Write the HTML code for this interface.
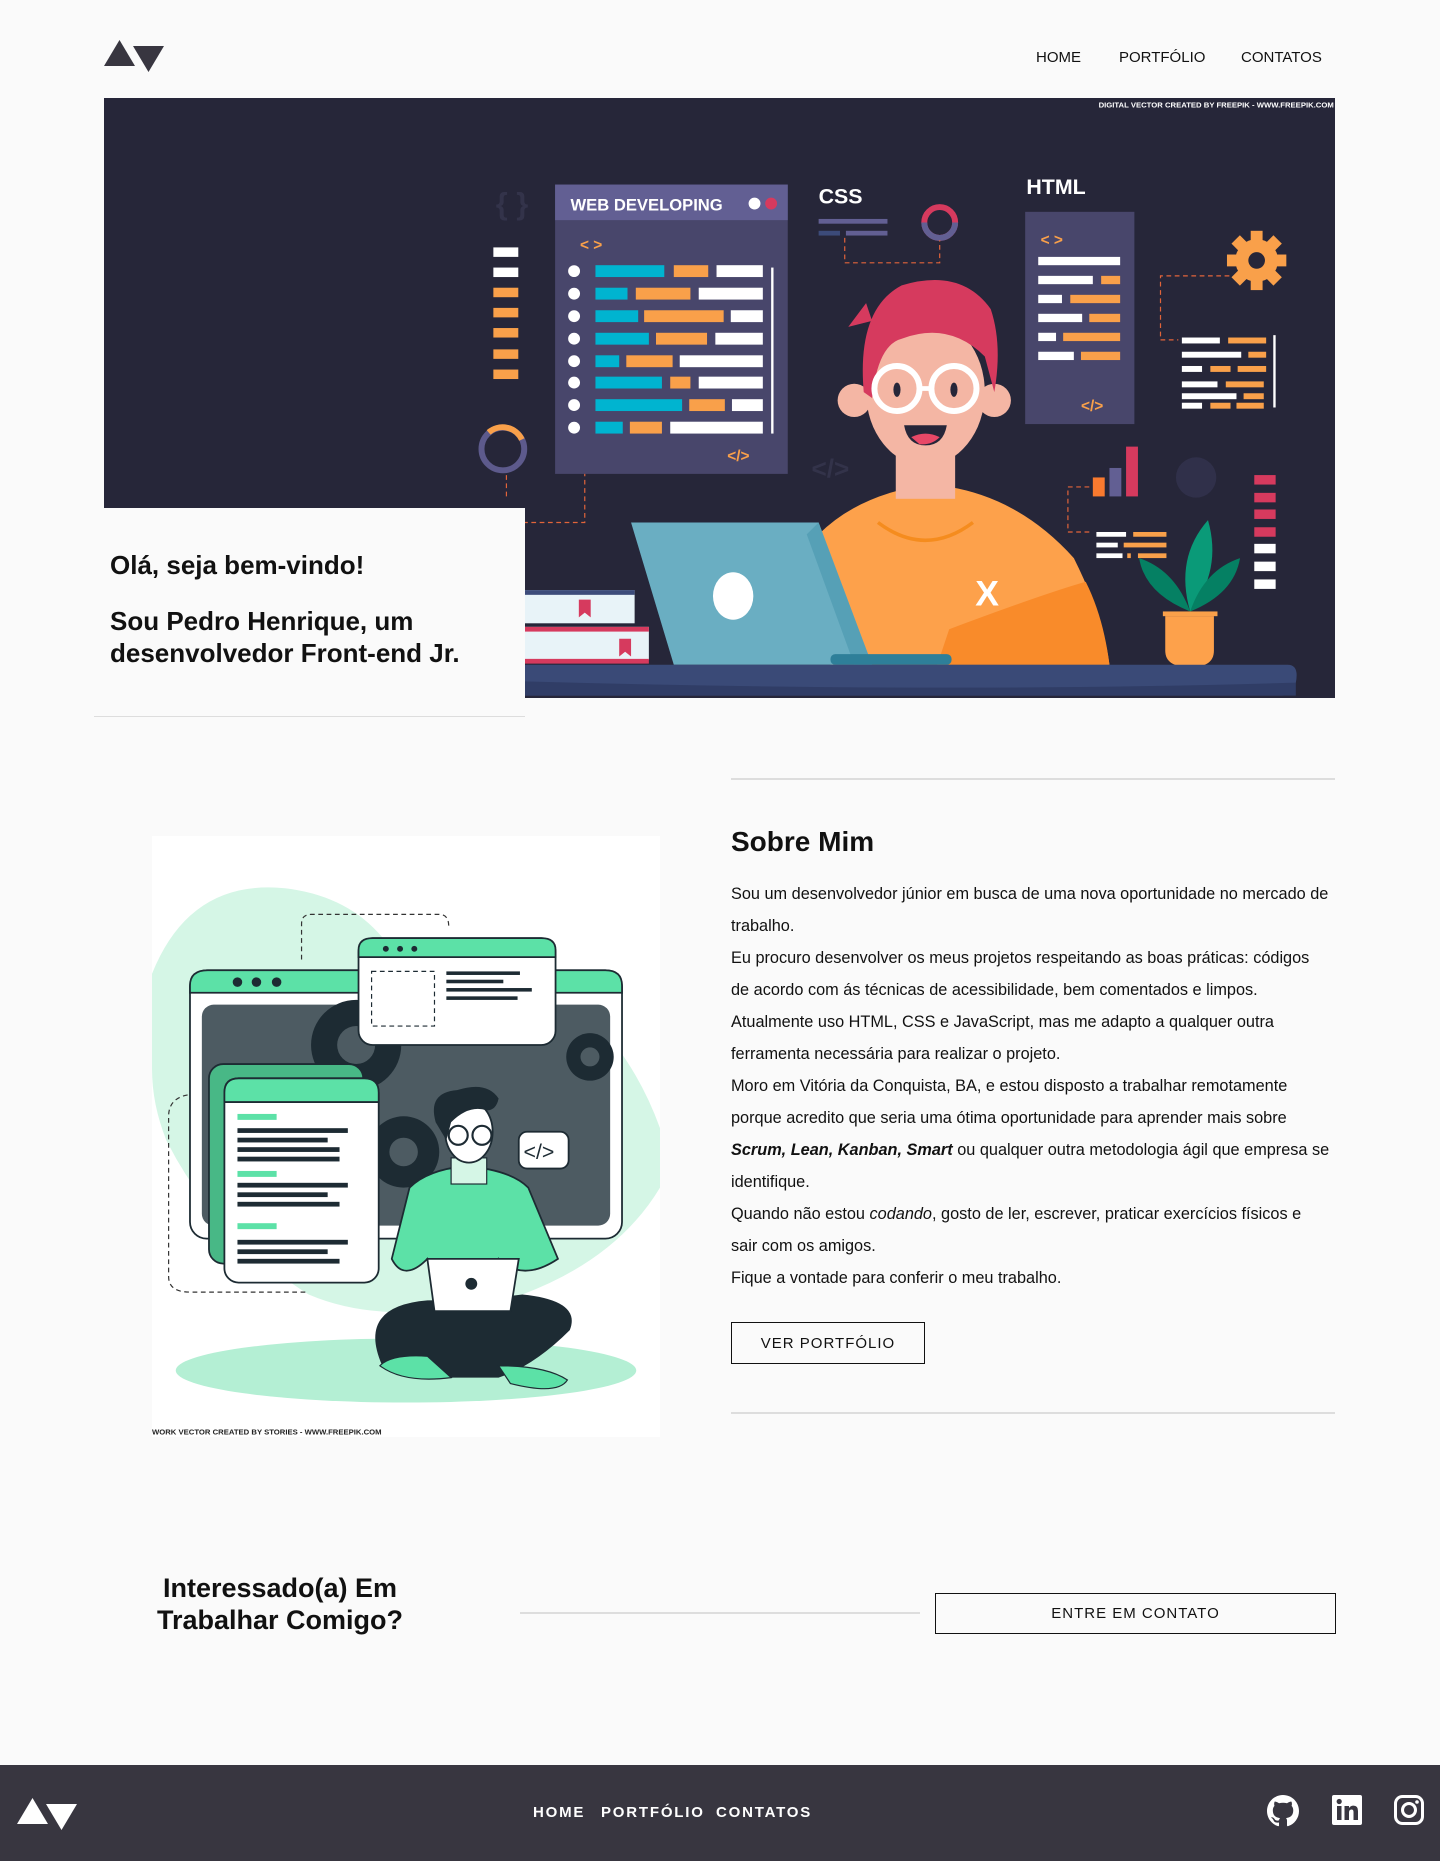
<!DOCTYPE html>
<html><head><meta charset="utf-8"><style>
*{margin:0;padding:0;box-sizing:border-box}
body{width:1440px;height:1861px;background:#fafafa;font-family:"Liberation Sans",sans-serif;color:#111;position:relative;overflow:hidden}
.abs{position:absolute}
.nav a{position:absolute;top:49px;font-size:15px;color:#111;text-decoration:none}
.p{position:absolute;left:731px;top:878px;font-size:16.3px;line-height:32px;color:#111;white-space:nowrap}
.btn{position:absolute;border:1.5px solid #111;font-size:15px;letter-spacing:1px;display:flex;align-items:center;justify-content:center;color:#111}
.fnav{position:absolute;top:1804px;font-size:15px;letter-spacing:1.8px;color:#fff;font-weight:bold}
</style></head><body>

<svg class="abs" style="left:104px;top:40px" width="61" height="33" viewBox="0 0 61 33">
<polygon points="0,26 15.5,0 31,26" fill="#383640"/><polygon points="29,6 60,6 44.5,32" fill="#383640"/></svg>
<div class="nav"><a style="left:1036px">HOME</a><a style="left:1119px">PORTFÓLIO</a><a style="left:1241px">CONTATOS</a></div>

<svg class="abs" style="left:104px;top:98px" width="1231" height="600" viewBox="88 82 1037 506" preserveAspectRatio="none">
<rect x="88" y="82" width="1037" height="506" fill="#262639"/>
<text x="1124" y="90" font-size="6.5" fill="#fff" text-anchor="end" font-weight="bold" font-family="Liberation Sans">DIGITAL VECTOR CREATED BY FREEPIK - WWW.FREEPIK.COM</text>
<g fill="#f9a04a"><rect x="416" y="208" width="21" height="8" fill="#fff"/><rect x="416" y="225" width="21" height="8" fill="#fff"/><rect x="416" y="242" width="21" height="8"/><rect x="416" y="259" width="21" height="8"/><rect x="416" y="276" width="21" height="8"/><rect x="416" y="294" width="21" height="8"/><rect x="416" y="311" width="21" height="8"/></g>
<text x="418" y="180" font-size="26" fill="#33334a" font-weight="bold">{ }</text>
<circle cx="424" cy="378" r="18" fill="none" stroke="#5d5a8c" stroke-width="5"/>
<path d="M412,364 A18,18 0 0 1 440,370" fill="none" stroke="#f9a04a" stroke-width="5"/>
<path d="M427,400 V420 M427,440 H493 V390" stroke="#e2643a" stroke-dasharray="4,3" fill="none"/>
<rect x="468" y="155" width="196" height="244" fill="#48466b"/>
<rect x="468" y="155" width="196" height="30" fill="#625f93"/>
<text x="481" y="177" font-size="14" fill="#fff" font-weight="bold">WEB DEVELOPING</text>
<circle cx="636" cy="171" r="5" fill="#fff"/><circle cx="650" cy="171" r="5" fill="#d63a5e"/>
<text x="489" y="210" font-size="13" fill="#f9a04a" font-weight="bold">&lt; &gt;</text>
<text x="613" y="388" font-size="13" fill="#f9a04a" font-weight="bold">&lt;/&gt;</text>
<rect x="650" y="225" width="2" height="140" fill="#fff"/>
<g>
<circle cx="484" cy="228" r="5" fill="#fff"/><rect x="502" y="223" width="58" height="10" fill="#00b4d0"/><rect x="568" y="223" width="29" height="10" fill="#f9a04a"/><rect x="604" y="223" width="39" height="10" fill="#fff"/>
<circle cx="484" cy="247" r="5" fill="#fff"/><rect x="502" y="242" width="27" height="10" fill="#00b4d0"/><rect x="536" y="242" width="46" height="10" fill="#f9a04a"/><rect x="589" y="242" width="54" height="10" fill="#fff"/>
<circle cx="484" cy="266" r="5" fill="#fff"/><rect x="502" y="261" width="36" height="10" fill="#00b4d0"/><rect x="543" y="261" width="67" height="10" fill="#f9a04a"/><rect x="616" y="261" width="27" height="10" fill="#fff"/>
<circle cx="484" cy="285" r="5" fill="#fff"/><rect x="502" y="280" width="45" height="10" fill="#00b4d0"/><rect x="553" y="280" width="43" height="10" fill="#f9a04a"/><rect x="603" y="280" width="40" height="10" fill="#fff"/>
<circle cx="484" cy="304" r="5" fill="#fff"/><rect x="502" y="299" width="20" height="10" fill="#00b4d0"/><rect x="528" y="299" width="39" height="10" fill="#f9a04a"/><rect x="573" y="299" width="70" height="10" fill="#fff"/>
<circle cx="484" cy="322" r="5" fill="#fff"/><rect x="502" y="317" width="56" height="10" fill="#00b4d0"/><rect x="565" y="317" width="17" height="10" fill="#f9a04a"/><rect x="589" y="317" width="54" height="10" fill="#fff"/>
<circle cx="484" cy="341" r="5" fill="#fff"/><rect x="502" y="336" width="73" height="10" fill="#00b4d0"/><rect x="581" y="336" width="30" height="10" fill="#f9a04a"/><rect x="617" y="336" width="26" height="10" fill="#fff"/>
<circle cx="484" cy="360" r="5" fill="#fff"/><rect x="502" y="355" width="23" height="10" fill="#00b4d0"/><rect x="531" y="355" width="27" height="10" fill="#f9a04a"/><rect x="565" y="355" width="78" height="10" fill="#fff"/>
</g>
<text x="684" y="402" font-size="22" fill="#33334a" font-weight="bold">&lt;/&gt;</text>
<text x="690" y="171" font-size="18" fill="#fff" font-weight="bold">CSS</text>
<rect x="690" y="184" width="58" height="4" fill="#625f93"/><rect x="690" y="194" width="18" height="4" fill="#3c4b7a"/><rect x="713" y="194" width="35" height="4" fill="#625f93"/>
<circle cx="792" cy="187" r="13" fill="none" stroke="#d63a5e" stroke-width="5"/>
<path d="M779,187 A13,13 0 0 0 805,187" fill="none" stroke="#625f93" stroke-width="5"/>
<path d="M712,200 V221 H792 V202" stroke="#e2643a" stroke-dasharray="4,3" fill="none"/>
<text x="865" y="163" font-size="18" fill="#fff" font-weight="bold">HTML</text>
<rect x="864" y="178" width="92" height="179" fill="#48466b"/>
<text x="877" y="206" font-size="13" fill="#f9a04a" font-weight="bold">&lt; &gt;</text>
<text x="911" y="346" font-size="13" fill="#f9a04a" font-weight="bold">&lt;/&gt;</text>
<g fill="#fff"><rect x="875" y="216" width="69" height="7"/><rect x="875" y="232" width="46" height="7"/><rect x="875" y="248" width="20" height="7"/><rect x="875" y="264" width="37" height="7"/><rect x="875" y="280" width="15" height="7"/><rect x="875" y="296" width="30" height="7"/></g>
<g fill="#f9a04a"><rect x="928" y="232" width="16" height="7"/><rect x="902" y="248" width="42" height="7"/><rect x="918" y="264" width="26" height="7"/><rect x="896" y="280" width="48" height="7"/><rect x="911" y="296" width="33" height="7"/></g>
<g transform="translate(1059,219)" fill="#f9a04a"><circle r="18"/>
<g><rect x="-5" y="-25" width="10" height="50"/><rect x="-5" y="-25" width="10" height="50" transform="rotate(45)"/><rect x="-5" y="-25" width="10" height="50" transform="rotate(90)"/><rect x="-5" y="-25" width="10" height="50" transform="rotate(135)"/></g>
<circle r="7" fill="#262639"/></g>
<path d="M1036,232 H978 V286 H993" stroke="#e2643a" stroke-dasharray="4,3" fill="none"/>
<g fill="#fff"><rect x="996" y="284" width="32" height="5"/><rect x="996" y="296" width="50" height="5"/><rect x="996" y="308" width="17" height="5"/><rect x="996" y="321" width="30" height="5"/><rect x="996" y="331" width="46" height="5"/><rect x="996" y="339" width="17" height="5"/><rect x="1073" y="282" width="2" height="61"/></g>
<g fill="#f9a04a"><rect x="1035" y="284" width="32" height="5"/><rect x="1052" y="296" width="15" height="5"/><rect x="1020" y="308" width="17" height="5"/><rect x="1043" y="308" width="24" height="5"/><rect x="1033" y="321" width="32" height="5"/><rect x="1048" y="331" width="17" height="5"/><rect x="1020" y="339" width="17" height="5"/><rect x="1042" y="339" width="23" height="5"/></g>
<rect x="921" y="402" width="10" height="16" fill="#f97a2f"/><rect x="935" y="394" width="10" height="24" fill="#625f93"/><rect x="949" y="376" width="10" height="42" fill="#d63a5e"/>
<path d="M918,410 H900 V448 H920" stroke="#e2643a" stroke-dasharray="4,3" fill="none"/>
<g fill="#fff"><rect x="924" y="448" width="25" height="4"/><rect x="924" y="457" width="18" height="4"/><rect x="924" y="466" width="22" height="4"/></g>
<g fill="#f9a04a"><rect x="955" y="448" width="28" height="4"/><rect x="947" y="457" width="36" height="4"/><rect x="950" y="466" width="3" height="4"/><rect x="959" y="466" width="24" height="4"/></g>
<circle cx="1008" cy="402" r="17" fill="#30304a"/>
<g fill="#d63a5e"><rect x="1057" y="400" width="18" height="8"/><rect x="1057" y="415" width="18" height="8"/><rect x="1057" y="429" width="18" height="8"/><rect x="1057" y="444" width="18" height="8"/></g>
<g fill="#fff"><rect x="1057" y="458" width="18" height="8"/><rect x="1057" y="473" width="18" height="8"/><rect x="1057" y="488" width="18" height="8"/></g>
<path d="M690,450 Q720,420 770,410 L800,410 Q860,420 905,470 Q930,520 935,560 H700 Z" fill="#fda14b"/>
<path d="M800,530 Q880,500 915,490 Q930,520 935,560 H790 Z" fill="#f98b2a"/>
<rect x="755" y="360" width="50" height="60" fill="#f4b6a4"/>
<path d="M740,440 Q780,470 820,440" stroke="#f58c1e" stroke-width="3" fill="none"/>
<text x="822" y="510" font-size="30" fill="#fff" font-weight="bold">X</text>
<circle cx="720" cy="337" r="14" fill="#f4b6a4"/><circle cx="838" cy="337" r="14" fill="#f4b6a4"/>
<ellipse cx="780" cy="330" rx="50" ry="62" fill="#f4b6a4"/>
<path d="M728,330 Q722,260 760,240 Q810,225 835,260 Q845,290 838,330 L830,300 Q800,270 760,285 Q740,290 735,335 Z" fill="#d63a5e"/>
<path d="M715,275 L735,270 L730,255 Z" fill="#d63a5e"/>
<circle cx="756" cy="327" r="19" fill="none" stroke="#fff" stroke-width="5"/><circle cx="804" cy="327" r="19" fill="none" stroke="#fff" stroke-width="5"/>
<rect x="774" y="325" width="12" height="4" fill="#fff"/>
<ellipse cx="756" cy="328" rx="3" ry="6" fill="#262639"/><ellipse cx="804" cy="328" rx="3" ry="6" fill="#262639"/>
<path d="M762,358 H798 Q795,375 780,375 Q765,375 762,358 Z" fill="#262639"/><path d="M768,368 Q780,362 792,368 Q785,375 775,374 Z" fill="#e84867"/>
<path d="M532,440 H690 L735,560 H568 Z" fill="#6aaec2"/>
<path d="M690,440 L735,560 L720,560 L680,450 Z" fill="#56a0b6"/>
<rect x="700" y="551" width="102" height="9" rx="4" fill="#2e7f99"/>
<ellipse cx="618" cy="502" rx="17" ry="20" fill="#fff"/>
<rect x="442" y="497" width="93" height="28" fill="#e8f3f8"/><rect x="442" y="497" width="93" height="4" fill="#3c4b7a"/>
<rect x="442" y="528" width="105" height="28" fill="#e8f3f8"/><rect x="442" y="528" width="105" height="4" fill="#d63a5e"/><rect x="442" y="555" width="105" height="4" fill="#d63a5e"/>
<path d="M488,505 h10 v15 l-5,-4 l-5,4z M522,538 h10 v15 l-5,-4 l-5,4z" fill="#d63a5e"/>
<path d="M1003,515 Q990,470 1018,438 Q1030,480 1003,515 Z" fill="#0a9a78"/>
<path d="M1003,515 Q965,500 960,470 Q990,480 1003,515 Z M1003,515 Q1040,500 1045,470 Q1015,480 1003,515 Z" fill="#058063"/>
<rect x="980" y="515" width="46" height="4" fill="#f9a04a"/>
<path d="M982,519 H1023 V548 Q1023,562 1003,562 Q982,562 982,548 Z" fill="#fda14b"/>
<path d="M442,560 H1085 Q1095,560 1092,575 Q1090,586 1080,586 H442 Z" fill="#3a4a77"/>
<path d="M442,574 Q800,584 1092,575 V586 H442Z" fill="#303d66"/>
</svg>

<div class="abs" style="left:94px;top:508px;width:431px;height:209px;background:#fafafa;border-bottom:1.5px solid #ddd"></div>
<div class="abs" style="left:110px;top:549px;font-size:26px;font-weight:bold;line-height:32px">Olá, seja bem-vindo!</div>
<div class="abs" style="left:110px;top:605px;font-size:26px;font-weight:bold;line-height:32px">Sou Pedro Henrique, um<br>desenvolvedor Front-end Jr.</div>

<div class="abs" style="left:731px;top:778px;width:604px;height:1.5px;background:#ddd"></div>
<div class="abs" style="left:731px;top:826px;font-size:28px;font-weight:bold">Sobre Mim</div>
<div class="p">Sou um desenvolvedor júnior em busca de uma nova oportunidade no mercado de<br>trabalho.<br>Eu procuro desenvolver os meus projetos respeitando as boas práticas: códigos<br>de acordo com ás técnicas de acessibilidade, bem comentados e limpos.<br>Atualmente uso HTML, CSS e JavaScript, mas me adapto a qualquer outra<br>ferramenta necessária para realizar o projeto.<br>Moro em Vitória da Conquista, BA, e estou disposto a trabalhar remotamente<br>porque acredito que seria uma ótima oportunidade para aprender mais sobre<br><b><i>Scrum, Lean, Kanban, Smart</i></b> ou qualquer outra metodologia ágil que empresa se<br>identifique.<br>Quando não estou <i>codando</i>, gosto de ler, escrever, praticar exercícios físicos e<br>sair com os amigos.<br>Fique a vontade para conferir o meu trabalho.</div>
<div class="btn" style="left:731px;top:1322px;width:194px;height:42px">VER PORTFÓLIO</div>
<div class="abs" style="left:731px;top:1412px;width:604px;height:1.5px;background:#ddd"></div>

<svg class="abs" style="left:152px;top:836px" width="508" height="601" viewBox="128 704 428 506" preserveAspectRatio="none">
<rect x="128" y="704" width="428" height="506" fill="#fff"/>
<path d="M128,820 Q160,740 240,748 Q300,755 330,800 L420,800 Q520,850 556,950 V1000 Q520,1060 440,1090 Q330,1120 260,1090 Q180,1040 140,960 Q128,930 128,900Z" fill="#d5f6e6"/>
<ellipse cx="342" cy="1154" rx="194" ry="27" fill="#b4efd4"/>
<path d="M254,808 V778 Q254,770 262,770 H370 Q378,770 378,780" stroke="#333" stroke-dasharray="4,3" fill="none"/>
<path d="M158,922 Q142,925 142,940 V1075 Q142,1088 160,1088 H260" stroke="#333" stroke-dasharray="4,3" fill="none"/>
<rect x="160" y="817" width="364" height="226" rx="14" fill="#fff" stroke="#1d2b33" stroke-width="1.5"/>
<path d="M160,836 V830 Q160,817 175,817 H510 Q524,817 524,830 V836Z" fill="#5ce1a7" stroke="#1d2b33" stroke-width="1.5"/>
<circle cx="200" cy="827" r="4" fill="#1d2b33"/><circle cx="216" cy="827" r="4" fill="#1d2b33"/><circle cx="233" cy="827" r="4" fill="#1d2b33"/>
<rect x="170" y="846" width="344" height="186" rx="10" fill="#4d5b62"/>
<circle cx="300" cy="880" r="38" fill="#1d2b33"/><circle cx="300" cy="880" r="16" fill="#4d5b62"/>
<circle cx="340" cy="970" r="30" fill="#1d2b33"/><circle cx="340" cy="970" r="12" fill="#4d5b62"/>
<circle cx="497" cy="890" r="20" fill="#1d2b33"/><circle cx="497" cy="890" r="8" fill="#4d5b62"/>
<rect x="302" y="790" width="166" height="90" rx="12" fill="#fff" stroke="#1d2b33" stroke-width="1.5"/>
<path d="M302,806 V800 Q302,790 314,790 H456 Q468,790 468,800 V806Z" fill="#5ce1a7" stroke="#1d2b33" stroke-width="1.5"/>
<circle cx="325" cy="799" r="2.5" fill="#1d2b33"/><circle cx="337" cy="799" r="2.5" fill="#1d2b33"/><circle cx="349" cy="799" r="2.5" fill="#1d2b33"/>
<rect x="313" y="818" width="53" height="46" fill="none" stroke="#1d2b33" stroke-dasharray="4,3"/>
<g fill="#1d2b33"><rect x="376" y="818" width="62" height="3"/><rect x="376" y="825" width="48" height="3"/><rect x="376" y="832" width="72" height="3"/><rect x="376" y="839" width="60" height="3"/></g>
<rect x="176" y="896" width="130" height="168" rx="12" fill="#48b886" stroke="#1d2b33" stroke-width="1.5"/>
<rect x="189" y="908" width="130" height="172" rx="12" fill="#fff" stroke="#1d2b33" stroke-width="1.5"/>
<path d="M189,928 V920 Q189,908 201,908 H307 Q319,908 319,920 V928Z" fill="#5ce1a7" stroke="#1d2b33" stroke-width="1.5"/>
<g fill="#5ce1a7"><rect x="200" y="938" width="33" height="5"/><rect x="200" y="986" width="33" height="5"/><rect x="200" y="1030" width="33" height="5"/></g>
<g fill="#1d2b33"><rect x="200" y="950" width="93" height="4"/><rect x="200" y="958" width="76" height="4"/><rect x="200" y="966" width="86" height="4"/><rect x="200" y="974" width="86" height="4"/><rect x="200" y="996" width="93" height="4"/><rect x="200" y="1004" width="76" height="4"/><rect x="200" y="1012" width="86" height="4"/><rect x="200" y="1044" width="93" height="4"/><rect x="200" y="1052" width="76" height="4"/><rect x="200" y="1060" width="86" height="4"/></g>
<rect x="437" y="953" width="42" height="31" rx="7" fill="#fff" stroke="#1d2b33" stroke-width="1.5"/>
<text x="441" y="976" font-size="18" fill="#1d2b33" font-family="Liberation Sans">&lt;/&gt;</text>
<path d="M345,1000 Q360,985 392,982 Q430,985 445,1000 L470,1060 Q440,1080 420,1060 L410,1100 H370 L360,1060 Q340,1080 330,1060Z" fill="#5ce1a7" stroke="#1d2b33" stroke-width="1.5"/>
<path d="M322,1150 Q300,1100 360,1095 Q400,1095 440,1090 Q490,1095 480,1120 Q450,1150 420,1160 H360 Z" fill="#1d2b33"/>
<path d="M320,1150 Q330,1140 360,1142 L380,1160 Q340,1165 320,1150Z M420,1150 Q460,1150 478,1162 Q470,1175 430,1165Z" fill="#5ce1a7" stroke="#1d2b33"/>
<path d="M360,1060 H437 L430,1104 H366Z" fill="#fff" stroke="#1d2b33" stroke-width="1.5"/>
<circle cx="397" cy="1081" r="5" fill="#1d2b33"/>
<rect x="380" y="975" width="30" height="22" fill="#d5f6e6" stroke="#1d2b33"/>
<ellipse cx="395" cy="953" rx="20" ry="26" fill="#fff" stroke="#1d2b33" stroke-width="1.5"/>
<path d="M367,945 Q360,920 385,918 Q410,910 420,925 Q418,935 410,935 Q395,930 380,945 L376,960Z" fill="#1d2b33"/>
<circle cx="386" cy="956" r="8" fill="none" stroke="#1d2b33" stroke-width="1.8"/><circle cx="406" cy="956" r="8" fill="none" stroke="#1d2b33" stroke-width="1.8"/>
<text x="128" y="1208" font-size="6.5" fill="#222" font-weight="bold" font-family="Liberation Sans">WORK VECTOR CREATED BY STORIES - WWW.FREEPIK.COM</text>
</svg>

<div class="abs" style="left:130px;top:1572px;width:300px;text-align:center;font-size:27px;font-weight:bold;line-height:32px">Interessado(a) Em<br>Trabalhar Comigo?</div>
<div class="abs" style="left:520px;top:1612px;width:400px;height:2px;background:#ddd"></div>
<div class="btn" style="left:935px;top:1593px;width:401px;height:41px">ENTRE EM CONTATO</div>

<div class="abs" style="left:0;top:1765px;width:1440px;height:96px;background:#383640"></div>
<svg class="abs" style="left:17px;top:1798px" width="61" height="33" viewBox="0 0 61 33">
<polygon points="0,26 15.5,0 31,26" fill="#fff"/><polygon points="29,6 60,6 44.5,32" fill="#fff"/></svg>
<div class="fnav" style="left:533px">HOME</div><div class="fnav" style="left:601px">PORTFÓLIO</div><div class="fnav" style="left:716px">CONTATOS</div>
<svg class="abs" style="left:1267px;top:1795px" width="32" height="32" viewBox="0 0 16 16"><path fill="#fff" d="M8 0C3.58 0 0 3.58 0 8c0 3.54 2.29 6.53 5.47 7.59.4.07.55-.17.55-.38 0-.19-.01-.82-.01-1.49-2.01.37-2.530-.49-2.69-.94-.09-.23-.48-.94-.82-1.13-.28-.15-.68-.52-.01-.53.63-.01 1.08.58 1.230.82.72 1.21 1.87.87 2.33.66.07-.52.28-.87.51-1.07-1.78-.2-3.64-.89-3.64-3.95 0-.87.31-1.59.82-2.15-.08-.2-.36-1.02.08-2.12 0 0 .67-.21 2.2.82.64-.18 1.32-.27 2-.27.68 0 1.36.09 2 .27 1.53-1.04 2.2-.82 2.2-.82.44 1.1.16 1.92.08 2.12.51.56.82 1.27.82 2.15 0 3.07-1.87 3.75-3.65 3.95.29.25.54.73.54 1.48 0 1.07-.01 1.93-.01 2.2 0 .21.15.46.55.38A8.013 8.013 0 0016 8c0-4.42-3.58-8-8-8z"/></svg>
<svg class="abs" style="left:1332px;top:1795px" width="30" height="30" viewBox="0 0 30 30"><rect width="30" height="30" rx="2" fill="#fff"/><rect x="5" y="11" width="4.5" height="14" fill="#383640"/><circle cx="7.2" cy="6.5" r="2.6" fill="#383640"/><path d="M12.5,11 H17 V13 Q18.5,10.6 21.5,10.6 Q26,10.6 26,16 V25 H21.5 V17 Q21.5,14.5 19.5,14.5 Q17,14.5 17,17.5 V25 H12.5Z" fill="#383640"/></svg>
<svg class="abs" style="left:1394px;top:1795px" width="30" height="30" viewBox="0 0 30 30"><rect x="1.5" y="1.5" width="27" height="27" rx="7" fill="none" stroke="#fff" stroke-width="3"/><circle cx="15" cy="15" r="6.5" fill="none" stroke="#fff" stroke-width="3"/><circle cx="23" cy="7" r="1.8" fill="#fff"/></svg>
</body></html>
